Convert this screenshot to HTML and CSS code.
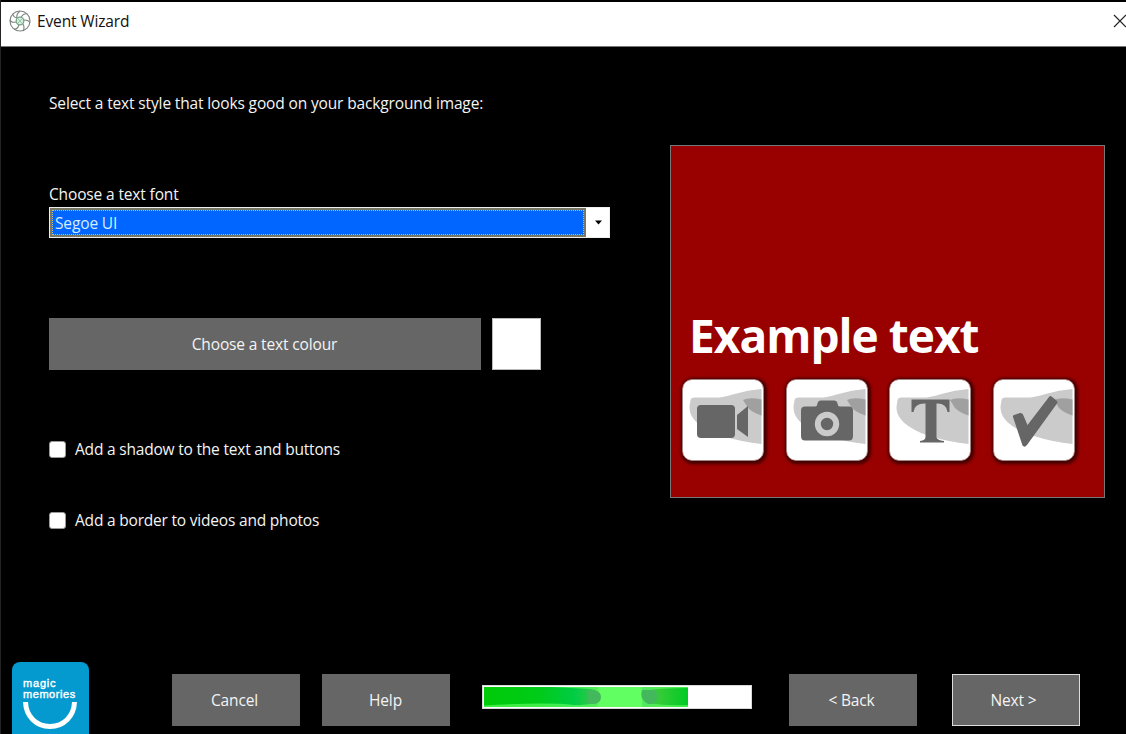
FILE: index.html
```html
<!DOCTYPE html>
<html lang="en">
<head>
<meta charset="utf-8">
<title>Event Wizard</title>
<link rel="stylesheet" href="styles.css">
</head>
<body>
<svg class="defs" width="0" height="0" aria-hidden="true">
  <defs>
    <g id="tile">
      <rect x=".5" y=".5" width="81" height="81" rx="9.500" fill="#fff" stroke="#a08888"/>
      <path fill="#cbcbcb" d="M8.500 21Q9 18.500 12.500 18.500H37.500Q46 17 52.500 15Q66 11 79.500 10V65Q60 63 42.500 57.500Q30 54 22.500 49Q7 40 7.500 27.500Z"/>
      <path fill="#a0a0a0" d="M61 21Q67 18 79.500 20.500V36.500Q71 34 66 29Z"/>
    </g>
  </defs>
</svg>
<div class="window">
  <header class="titlebar">
    <svg class="app-icon" viewBox="0 0 22 22">
      <g fill="none" stroke="#7d8580" stroke-width="1.100">
        <circle cx="11" cy="11" r="10"/>
        <path d="M8 8Q7 4 11 1M12 7Q15 3 18 4M15 10Q20 10 21 13M14 14Q16 18 14 21M10 15Q8 20 5 19M7 12Q2 13 1 10M8 8Q4 7 4 4"/>
      </g>
      <circle cx="11" cy="11" r="3.800" fill="#d8efe0" stroke="#75a588" stroke-width="1.300"/>
      <path d="M9 9L13 13M13 9L9 13" stroke="#93bda2" stroke-width=".8"/>
    </svg>
    <span class="title">Event Wizard</span>
    <svg class="close" viewBox="0 0 14 14"><path d="M1 1L13 13M13 1L1 13" fill="none" stroke="#222" stroke-width="1.200"/></svg>
  </header>
  <main class="content">
    <section class="options">
      <p class="intro">Select a text style that looks good on your background image:</p>
      <label class="font-label">Choose a text font</label>
      <div class="combo">
        <div class="combo-value">Segoe UI</div>
        <div class="combo-arrow"><svg width="7" height="5" viewBox="0 0 7 5"><path d="M0 .5H7L3.500 4.500Z"/></svg></div>
      </div>
      <div class="colour-row">
        <div class="button colour-button">Choose a text colour</div>
        <div class="swatch"></div>
      </div>
      <div class="check"><i class="box"></i><span>Add a shadow to the text and buttons</span></div>
      <div class="check"><i class="box"></i><span>Add a border to videos and photos</span></div>
    </section>
    <section class="preview">
      <div class="example">Example text</div>
      <div class="tiles">
        <svg class="tile" viewBox="0 0 82 82"><use href="#tile"/><rect x="15" y="26" width="38" height="33" rx="4" fill="#666"/><path d="M55 36L66 27V58L55 50Z" fill="#666"/></svg>
        <svg class="tile" viewBox="0 0 82 82"><use href="#tile"/><path fill="#666" d="M19 27.500H29Q31.500 27 31.500 24.500Q32 21.500 35 21.500H48Q51 21.500 51.500 24.500Q51.500 27 54 27.500H63Q67 27.500 67 31.500V57Q67 61.500 63 61.500H19Q15 61.500 15 57V31.500Q15 27.500 19 27.500Z"/><circle cx="41" cy="45" r="9.200" fill="#666" stroke="#cbcbcb" stroke-width="6"/></svg>
        <svg class="tile" viewBox="0 0 82 82"><use href="#tile"/><path fill="#666" d="M22.500 20.500H60.500V33H58.500Q57.500 24 47.500 24.500V58Q47.500 61 55 62V63.500H31V62Q36.500 61.500 36.500 58V24.500Q25.500 24 24.500 33H22.500Z"/></svg>
        <svg class="tile" viewBox="0 0 82 82"><use href="#tile"/><path fill="#666" d="M20 38Q19.500 36.500 21 36L27 34Q29 33.500 30 35.500L34.500 46L56 18Q57 16.500 58.500 17.500L63.500 21.500Q65 23 64 24.500L34 66Q31.500 69 29.500 66.500Z"/></svg>
      </div>
    </section>
  </main>
  <footer class="footer">
    <div class="logo">
      <div class="logo-text"><span class="magic">magic</span><span>memories</span></div>
      <svg class="smile" viewBox="0 0 54 28"><path d="M2.500 0C3 14 13 24.500 27 24.500S51 14 51.500 0" fill="none" stroke="#fff" stroke-width="5"/></svg>
    </div>
    <div class="button cancel">Cancel</div>
    <div class="button help">Help</div>
    <svg class="progress" viewBox="0 0 270 24">
      <defs>
        <linearGradient id="bar"><stop offset="0" stop-color="#00cb08"/><stop offset=".27" stop-color="#00cb18"/><stop offset=".44" stop-color="#00cc44"/><stop offset=".55" stop-color="#38c84a"/><stop offset=".57" stop-color="#62ff62"/><stop offset=".77" stop-color="#62ff62"/><stop offset=".78" stop-color="#36bd62"/><stop offset=".86" stop-color="#35cb38"/><stop offset="1" stop-color="#00cb24"/></linearGradient>
      </defs>
      <rect width="270" height="24" fill="#fff"/>
      <rect x="2" y="2" width="204" height="20" fill="url(#bar)"/>
      <path d="M70 2H206V3Q178 3 160 6Q158 14 165 18Q185 21 206 20V22H2V20.500Q65 17 92 20Q119 20 119 12Q119 5 108 4Z" fill="#62ff62" opacity=".65"/>
      <path d="M108 5Q119 5 119 12Q119 20 108 19L103 17Q109 12 104 7ZM160 5H173L176 12L171 19H166Q157 14 160 5Z" fill="#43b85c"/>
      <rect x=".5" y=".5" width="269" height="23" fill="none" stroke="#d8d8d8"/>
    </svg>
    <div class="button back">&lt; Back</div>
    <div class="button next">Next &gt;</div>
  </footer>
</div>
</body>
</html>
```
FILE: styles.css
```css
* { box-sizing: border-box; }
body { margin: 0; background: #000; color: #f4f4f4; font-family: "Open Sans", "Noto Sans", sans-serif; font-size: 15.500px; line-height: 20px; letter-spacing: -.14px; white-space: nowrap; }
.defs { display: block; height: 0; }
.window { width: 1126px; height: 734px; overflow: hidden; display: flex; flex-direction: column; border-left: 1px solid #242424; }
.titlebar { height: 47px; flex: none; border-top: 2px solid #000; border-bottom: 1px solid #777; background: #fff; color: #111; display: flex; align-items: center; padding: 0 0 6px 8px; }
.app-icon { width: 22px; height: 22px; margin-right: 6px; }
.close { width: 14px; height: 14px; margin-left: auto; margin-right: -1px; }
.content { height: 615px; flex: none; display: flex; justify-content: space-between; padding: 0 21px 0 48px; }
.options { width: 561px; display: flex; flex-direction: column; }
.intro { margin: 46px 0 71px; height: 20px; }
.font-label { height: 20px; margin-bottom: 3px; }
.combo { height: 31px; flex: none; display: flex; background: #fff; border: 1px solid #eee; }
.combo-value { flex: 1; border: 2px solid #777764; background: #0066ff; outline: 1px dotted #d0c878; outline-offset: -3px; display: flex; align-items: center; padding-left: 3px; color: #d8ecff; }
.combo-arrow { width: 23px; display: flex; align-items: center; justify-content: center; padding-left: 2px; }
.colour-row { display: flex; gap: 11px; margin: 80px 0 69px; height: 52px; flex: none; }
.button { background: #666; display: flex; align-items: center; justify-content: center; height: 52px; }
.colour-button { width: 432px; padding-right: 1px; }
.swatch { width: 49px; background: #fff; border: 1px solid #bbb; }
.check { height: 20px; margin-bottom: 51px; display: flex; align-items: center; gap: 9px; letter-spacing: -.2px; }
.box { width: 17px; height: 17px; background: #fff; border: 1px solid #999; border-radius: 3px; }
.preview { width: 435px; height: 353px; margin-top: 98px; background: #990000; border: 1px solid #777; padding: 159px 0 0 11px; }
.example { height: 74px; padding: 0 0 0 7px; font-size: 46px; line-height: 61px; font-weight: 700; color: #fff; letter-spacing: -.98px; }
.tiles { display: flex; gap: 21.700px; }
.tile { width: 82px; height: 82px; flex: none; border-radius: 10px; box-shadow: 1px 1px 3px 2px #430000; }
.footer { height: 72px; flex: none; display: flex; }
.logo { width: 77px; height: 82px; margin: 0 83px 0 11px; background: #0499cf; border-radius: 8px 8px 0 0; padding: 16px 0 0 11px; flex: none; }
.logo-text { display: flex; flex-direction: column; font: 400 11px/11px "Liberation Sans", sans-serif; color: #fff; letter-spacing: .55px; -webkit-text-stroke: .4px #fff; }
.magic { letter-spacing: .8px; }
.smile { display: block; width: 54px; height: 28px; margin-top: 2px; }
.cancel, .help, .back, .next { width: 128px; margin-top: 12px; padding-right: 3px; }
.cancel { margin-right: 22px; }
.help { margin-right: 32px; padding-right: 1px; }
.progress { width: 270px; height: 24px; margin: 23px 37px 0 0; }
.back { margin-right: 35px; }
.next { border: 1px solid #ddd; padding-right: 5px; }
```
